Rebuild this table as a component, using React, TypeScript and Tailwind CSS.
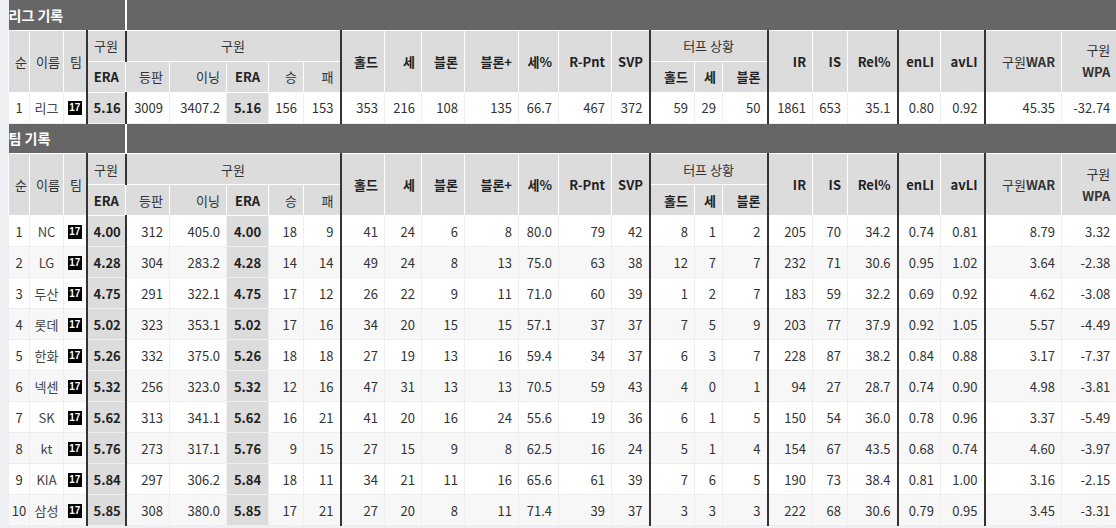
import React from "react";

type Row = (string | number)[];

const leagueRows: Row[] = [
    [1, "리그", "5.16", 3009, "3407.2", "5.16", 156, 153, 353, 216, 108, 135, "66.7", 467, 372, 59, 29, 50, 1861, 653, "35.1", "0.80", "0.92", "45.35", "-32.74"],
];

const teamRows: Row[] = [
    [1, "NC", "4.00", 312, "405.0", "4.00", 18, 9, 41, 24, 6, 8, "80.0", 79, 42, 8, 1, 2, 205, 70, "34.2", "0.74", "0.81", "8.79", "3.32"],
    [2, "LG", "4.28", 304, "283.2", "4.28", 14, 14, 49, 24, 8, 13, "75.0", 63, 38, 12, 7, 7, 232, 71, "30.6", "0.95", "1.02", "3.64", "-2.38"],
    [3, "두산", "4.75", 291, "322.1", "4.75", 17, 12, 26, 22, 9, 11, "71.0", 60, 39, 1, 2, 7, 183, 59, "32.2", "0.69", "0.92", "4.62", "-3.08"],
    [4, "롯데", "5.02", 323, "353.1", "5.02", 17, 16, 34, 20, 15, 15, "57.1", 37, 37, 7, 5, 9, 203, 77, "37.9", "0.92", "1.05", "5.57", "-4.49"],
    [5, "한화", "5.26", 332, "375.0", "5.26", 18, 18, 27, 19, 13, 16, "59.4", 34, 37, 6, 3, 7, 228, 87, "38.2", "0.84", "0.88", "3.17", "-7.37"],
    [6, "넥센", "5.32", 256, "323.0", "5.32", 12, 16, 47, 31, 13, 13, "70.5", 59, 43, 4, 0, 1, 94, 27, "28.7", "0.74", "0.90", "4.98", "-3.81"],
    [7, "SK", "5.62", 313, "341.1", "5.62", 16, 21, 41, 20, 16, 24, "55.6", 19, 36, 6, 1, 5, 150, 54, "36.0", "0.78", "0.96", "3.37", "-5.49"],
    [8, "kt", "5.76", 273, "317.1", "5.76", 9, 15, 27, 15, 9, 8, "62.5", 16, 24, 5, 1, 4, 154, 67, "43.5", "0.68", "0.74", "4.60", "-3.97"],
    [9, "KIA", "5.84", 297, "306.2", "5.84", 18, 11, 34, 21, 11, 16, "65.6", 61, 39, 7, 6, 5, 190, 73, "38.4", "0.81", "1.00", "3.16", "-2.15"],
    [10, "삼성", "5.85", 308, "380.0", "5.85", 17, 21, 27, 20, 8, 11, "71.4", 39, 37, 3, 3, 3, 222, 68, "30.6", "0.79", "0.95", "3.45", "-3.31"],
];

// column widths, 순 .. 구원WPA
const widths = [21, 34, 23, 39, 44, 57, 42, 35, 37, 44, 37, 43, 54, 40, 53, 38, 45, 28, 45, 45, 35, 50, 43, 44, 77, 55];

// data index that gets a thick left border
const thick = new Set([2, 3, 8, 15, 18, 21, 23]);

const hd = "border border-white bg-[#dcdcdc] px-[6px] h-[31px] text-[#333] font-normal whitespace-nowrap";
const hdBold = "border border-white bg-[#dcdcdc] px-[6px] h-[31px] text-[#222] font-bold whitespace-nowrap";
const thickL = "border-l-2 border-l-[#333]";

const Badge = () => (
    <span className="inline-block w-[14px] h-[14px] bg-black text-white text-[10px] font-bold leading-[14px] text-center align-middle font-['Liberation_Sans',sans-serif]">
        17
    </span>
);

const StatTable = ({ title, rows }: { title: string, rows: Row[] }) => {
    return (
        <table className="table-fixed border-collapse w-[1108px] text-[13px]">
            <colgroup>
                {widths.map((w, i) => <col key={i} style={{ width: w }} />)}
            </colgroup>
            <tbody>
                <tr className="bg-[#666]">
                    <td colSpan={4} className="h-[30px] text-white font-bold text-[14px] whitespace-nowrap border-r-2 border-r-white">{title}</td>
                    <td colSpan={22}></td>
                </tr>
                <tr>
                    <th rowSpan={2} className={`${hd} text-center px-0`}>순</th>
                    <th rowSpan={2} className={`${hd} text-center px-0`}>이름</th>
                    <th rowSpan={2} className={`${hd} text-center px-0`}>팀</th>
                    <th className={`${hd} text-center ${thickL}`}>구원</th>
                    <th colSpan={5} className={`${hd} text-center ${thickL}`}>구원</th>
                    <th rowSpan={2} className={`${hdBold} text-right ${thickL}`}>홀드</th>
                    <th rowSpan={2} className={`${hdBold} text-right`}>세</th>
                    <th rowSpan={2} className={`${hdBold} text-right`}>블론</th>
                    <th rowSpan={2} className={`${hdBold} text-right`}>블론+</th>
                    <th rowSpan={2} className={`${hdBold} text-right`}>세%</th>
                    <th rowSpan={2} className={`${hdBold} text-right`}>R-Pnt</th>
                    <th rowSpan={2} className={`${hdBold} text-right`}>SVP</th>
                    <th colSpan={3} className={`${hd} text-center ${thickL}`}>터프 상황</th>
                    <th rowSpan={2} className={`${hdBold} text-right ${thickL}`}>IR</th>
                    <th rowSpan={2} className={`${hdBold} text-right`}>IS</th>
                    <th rowSpan={2} className={`${hdBold} text-right`}>Rel%</th>
                    <th rowSpan={2} className={`${hdBold} text-right ${thickL}`}>enLI</th>
                    <th rowSpan={2} className={`${hdBold} text-right`}>avLI</th>
                    <th rowSpan={2} className={`${hd} text-right ${thickL}`}>구원<b>WAR</b></th>
                    <th rowSpan={2} className={`${hd} text-right leading-[22px]`}>구원<br /><b>WPA</b></th>
                </tr>
                <tr>
                    <th className={`${hdBold} text-center ${thickL}`}>ERA</th>
                    <th className={`${hd} text-right`}>등판</th>
                    <th className={`${hd} text-right`}>이닝</th>
                    <th className={`${hdBold} text-center`}>ERA</th>
                    <th className={`${hd} text-right`}>승</th>
                    <th className={`${hd} text-right`}>패</th>
                    <th className={`${hdBold} text-right ${thickL}`}>홀드</th>
                    <th className={`${hdBold} text-right`}>세</th>
                    <th className={`${hdBold} text-right`}>블론</th>
                </tr>
                {rows.map((r, ri) => (
                    <tr key={ri} className={ri % 2 === 1 ? "bg-[#f7f7f7]" : "bg-white"}>
                        <td className="border border-[#eee] h-[31px] text-center text-[#333] whitespace-nowrap">{r[0]}</td>
                        <td className="border border-[#eee] text-center text-[#444] px-0 whitespace-nowrap">{r[1]}</td>
                        <td className="border border-[#eee] text-center"><Badge /></td>
                        {r.slice(2).map((v, ci) => {
                            const idx = ci + 2;
                            const era = idx === 2 || idx === 5;
                            return (
                                <td
                                    key={ci}
                                    className={`border border-[#eee] px-[6px] whitespace-nowrap ${era ? "bg-[#dcdcdc] font-bold text-center text-[#222]" : "text-right text-[#333]"} ${thick.has(idx) ? thickL : ""}`}
                                >
                                    {v}
                                </td>
                            );
                        })}
                    </tr>
                ))}
            </tbody>
        </table>
    );
};

const App = () => {
    return (
        <div className="min-h-screen bg-[#eef0f4] pl-[8px] font-['Noto_Sans_CJK_KR',sans-serif] leading-none">
            <StatTable title="리그 기록" rows={leagueRows} />
            <StatTable title="팀 기록" rows={teamRows} />
        </div>
    );
};

export default App;
